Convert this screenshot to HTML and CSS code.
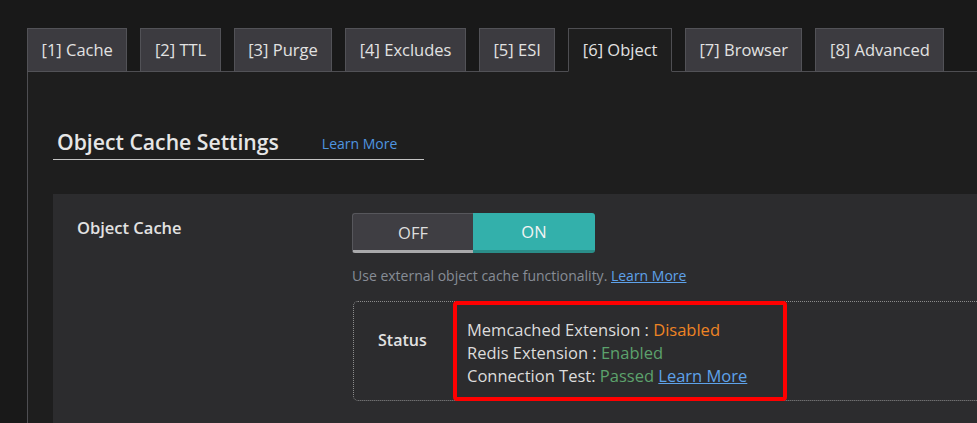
FILE: index.html
```html
<!DOCTYPE html>
<html lang="en">
<head>
<meta charset="utf-8">
<title>Object Cache Settings</title>
<link rel="stylesheet" href="styles.css">
</head>
<body>
<div class="page">
  <nav class="tabs">
    <a class="tab">[1] Cache</a>
    <a class="tab">[2] TTL</a>
    <a class="tab">[3] Purge</a>
    <a class="tab">[4] Excludes</a>
    <a class="tab">[5] ESI</a>
    <a class="tab active">[6] Object</a>
    <a class="tab">[7] Browser</a>
    <a class="tab">[8] Advanced</a>
  </nav>
  <div class="panel">
    <div class="section-head">
      <h3 class="section-title">Object Cache Settings</h3>
      <a class="head-link">Learn More</a>
    </div>
    <div class="settings">
      <div class="row">
        <div class="row-label">Object Cache</div>
        <div class="field">
          <div class="toggle">
            <span class="toggle-off">OFF</span>
            <span class="toggle-on">ON</span>
          </div>
          <p class="desc">Use external object cache functionality. <a class="link">Learn More</a></p>
          <div class="status-box">
            <div class="status-label">Status</div>
            <div class="status-values">
              <div>Memcached Extension : <span class="warn">Disabled</span></div>
              <div>Redis Extension : <span class="ok">Enabled</span></div>
              <div>Connection Test: <span class="ok">Passed</span> <a class="link">Learn More</a></div>
              <div class="highlight"></div>
            </div>
          </div>
        </div>
      </div>
    </div>
  </div>
</div>
</body>
</html>
```
FILE: styles.css
```css
html, body {
  margin: 0;
  padding: 0;
  background: #191919;
  overflow: hidden;
  height: 100%;
}
body {
  font-family: "Open Sans", "Noto Sans", sans-serif;
  color: #dcdcdc;
}
.page {
  width: 1200px;
  padding: 28px 0 0 27px;
  box-sizing: border-box;
}
.tabs {
  display: flex;
  gap: 13px;
  position: relative;
  z-index: 1;
  margin-bottom: -1px;
}
.tab {
  box-sizing: border-box;
  height: 44px;
  padding: 0 13.5px 1px;
  display: flex;
  align-items: center;
  background: #3c3b40;
  border: 1px solid #525257;
  color: #e2e2e2;
  font-size: 16.5px;
  white-space: nowrap;
}
.tab.active {
  background: #1e1e1e;
  border-color: #4e4e52;
  border-bottom-color: #1e1e1e;
}
.panel {
  background: #1e1e1e;
  border-top: 1px solid #4e4e52;
  border-left: 1px solid #4e4e52;
  min-height: 400px;
  padding-top: 56px;
}
.section-head {
  margin-left: 25px;
  width: 371px;
  box-sizing: border-box;
  padding: 0 0 3px 4px;
  border-bottom: 1px solid #c4c4c4;
  display: flex;
  align-items: center;
}
.section-title {
  margin: 0;
  font-size: 21.2px;
  line-height: 28px;
  font-weight: 600;
  color: #e6e6e6;
}
.head-link {
  margin-left: 43px;
  margin-top: 3px;
  font-size: 14px;
  color: #4f95e0;
}
.settings {
  margin: 34px 0 0 25px;
  background: #2c2c2e;
  padding: 19px 0 30px 24px;
}
.row {
  display: flex;
}
.row-label {
  width: 275px;
  flex: none;
  font-size: 16.5px;
  font-weight: 600;
  line-height: 22px;
  padding-top: 4px;
  color: #e2e2e2;
}
.field {
  flex: 1;
}
.toggle {
  display: inline-flex;
}
.toggle span {
  box-sizing: border-box;
  height: 40px;
  display: flex;
  align-items: center;
  justify-content: center;
  font-size: 16.5px;
}
.toggle-off {
  width: 121px;
  background: #3f3e43;
  border: 1px solid #57575c;
  border-right: none;
  border-bottom: 3px solid #a9a9ab;
  border-radius: 3px 0 0 3px;
  color: #dedede;
}
.toggle-on {
  width: 122px;
  background: #33b0ab;
  border-bottom: 3px solid #2a8d89;
  border-radius: 0 3px 3px 0;
  color: #f4f4f4;
}
.desc {
  margin: 13px 0 0;
  font-size: 14px;
  line-height: 20px;
  color: #878d96;
}
.link {
  color: #5ea2ea;
  text-decoration: underline;
}
.status-box {
  margin: 15px 0 0 1px;
  height: 100px;
  box-sizing: border-box;
  border: 1px dotted #8c8c8c;
  border-radius: 5px;
  display: flex;
}
.status-label {
  width: 99px;
  flex: none;
  box-sizing: border-box;
  padding: 27px 0 0 24px;
  font-size: 16px;
  line-height: 22px;
  font-weight: 600;
  color: #e2e2e2;
}
.status-values {
  position: relative;
  padding: 16px 14px;
  font-size: 16.5px;
  line-height: 23px;
  color: #dcdcdc;
}
.warn { color: #ee8424; }
.ok { color: #5ca26c; }
.highlight {
  position: absolute;
  left: 0;
  top: -1px;
  width: 334px;
  height: 100px;
  box-sizing: border-box;
  border: 4px solid #ff0000;
  border-radius: 4px;
}
```
